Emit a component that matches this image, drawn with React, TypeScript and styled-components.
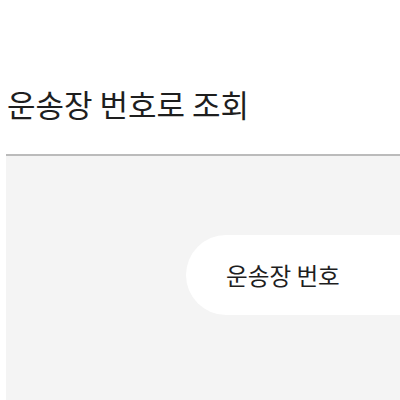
import React from "react";
import styled, { createGlobalStyle } from "styled-components";

const Global = createGlobalStyle`
  html, body { margin: 0; padding: 0; background: #ffffff; }
  body { font-family: "Noto Sans CJK KR", "Noto Sans", sans-serif; color: #1e1e1e; }
  #root { width: 400px; height: 400px; overflow: hidden; }
`;

const Page = styled.div`
  display: flex;
  flex-direction: column;
  height: 400px;
  padding-left: 6px;
  box-sizing: border-box;
`;

const Header = styled.header`
  height: 156px;
  display: flex;
  align-items: flex-end;
  padding-left: 1px;
  padding-bottom: 29px;
  box-sizing: border-box;
  border-bottom: 2px solid #bbbbbb;
`;

const Title = styled.h1`
  margin: 0;
  font-size: 31px;
  font-weight: 400;
  line-height: 42px;
  letter-spacing: 0;
`;

const Panel = styled.main`
  flex: 1;
  background: #f4f4f4;
  padding-top: 79px;
  padding-left: 180px;
`;

const Pill = styled.div`
  height: 80px;
  border-radius: 40px 0 0 40px;
  background: #ffffff;
  display: flex;
  align-items: center;
  padding-left: 40px;
  font-size: 23.6px;
  font-weight: 400;
`;

export default function App() {
  return (
    <>
      <Global />
      <Page>
        <Header>
          <Title>운송장 번호로 조회</Title>
        </Header>
        <Panel>
          <Pill>운송장 번호</Pill>
        </Panel>
      </Page>
    </>
  );
}
